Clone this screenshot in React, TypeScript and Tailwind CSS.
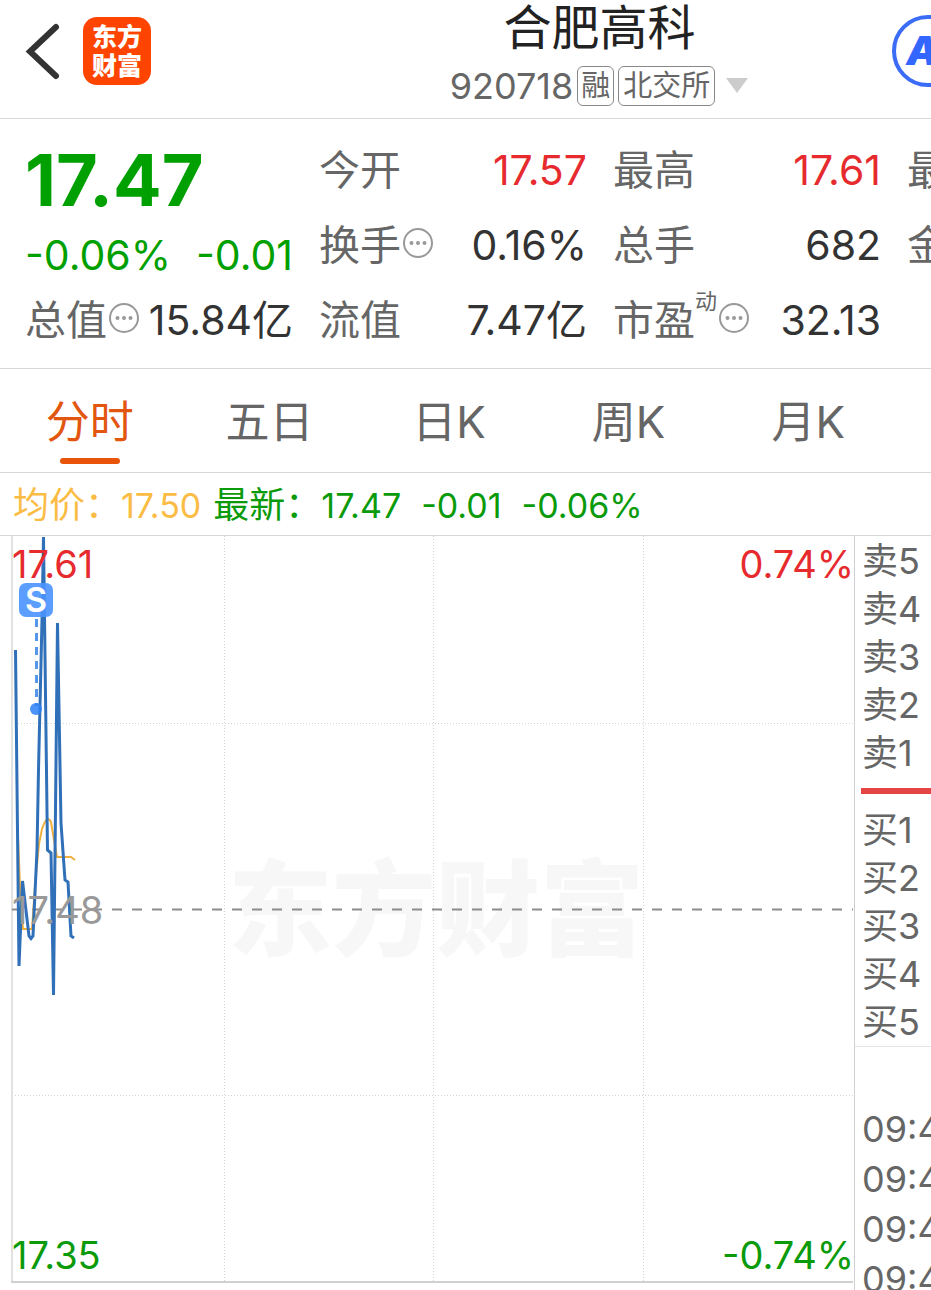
import React, { useState } from "react";

interface Stat {
  label: string;
  value?: string;
  color?: string;
  note?: string;
  info?: boolean;
}

const stats: Stat[] = [
  { label: "今开", value: "17.57", color: "text-[#e62a2e]" },
  { label: "最高", value: "17.61", color: "text-[#e62a2e]" },
  { label: "最低" },
  { label: "换手", value: "0.16%", info: true },
  { label: "总手", value: "682" },
  { label: "金额" },
  { label: "总值", value: "15.84亿", info: true },
  { label: "流值", value: "7.47亿" },
  { label: "市盈", value: "32.13", note: "动", info: true },
];

const tabs = ["分时", "五日", "日K", "周K", "月K"];
const asks = ["卖5", "卖4", "卖3", "卖2", "卖1"];
const bids = ["买1", "买2", "买3", "买4", "买5"];
const ticks = ["09:4", "09:4", "09:4", "09:4"];

const InfoButton: React.FC<{ label: string }> = ({ label }) => (
  <button type="button" aria-label={label} className="mb-1.5 flex-none">
    <svg width="34" height="34" viewBox="0 0 34 34" className="block">
      <circle cx="17" cy="17" r="14" fill="none" stroke="#999" strokeWidth="2" />
      <circle cx="10.500" cy="17" r="2" fill="#999" />
      <circle cx="17" cy="17" r="2" fill="#999" />
      <circle cx="23.500" cy="17" r="2" fill="#999" />
    </svg>
  </button>
);

const StatCell: React.FC<{ stat: Stat }> = ({ stat }) => (
  <div className="flex h-[75px] min-w-0 items-center whitespace-nowrap text-[41px] leading-[75px]">
    <dt className="flex flex-none items-center text-[#666]">
      {stat.label}
      {stat.note && (
        <span className="self-start text-[22px] leading-9">{stat.note}</span>
      )}
      {stat.info && <InfoButton label={`${stat.label}说明`} />}
    </dt>
    {stat.value && (
      <dd className={`ml-auto ${stat.color ?? "text-[#333]"}`}>{stat.value}</dd>
    )}
  </div>
);

const Header: React.FC = () => (
  <header className="flex h-[119px] flex-none items-start border-b border-[#d8d8d8]">
    <button type="button" aria-label="返回" className="ml-6 mt-5 flex-none">
      <svg width="40" height="62" viewBox="0 0 40 62" className="block">
        <path
          d="M32 7 6 31.5 32 56"
          fill="none"
          stroke="#333"
          strokeWidth="6"
          strokeLinecap="round"
        />
      </svg>
    </button>
    <a
      href="#"
      className="ml-[19px] mt-[17px] flex h-[68px] w-[68px] flex-none flex-col items-center justify-center rounded-[14px] bg-[#ff4400] pt-0.5 text-[25px] font-black leading-[29px] text-white"
    >
      <span>东方</span>
      <span>财富</span>
    </a>
    <div className="flex flex-1 flex-col items-center pl-[156px]">
      <h1 className="text-[48px] leading-[56px] text-[#222]">合肥高科</h1>
      <div className="mt-2.5 flex items-center gap-1 text-[#666]">
        <span className="text-[36px] leading-10">920718</span>
        <span className="flex h-10 items-center rounded-md border border-[#888] px-[3px] text-[29px] leading-9">
          融
        </span>
        <span className="flex h-10 items-center rounded-md border border-[#888] px-1 text-[29px] leading-9">
          北交所
        </span>
        <svg width="24" height="16" viewBox="0 0 24 16" className="ml-1.5">
          <path d="M1 0h22L12 15z" fill="#ccc" />
        </svg>
      </div>
    </div>
    <button
      type="button"
      className="-mr-[33px] mt-[15px] flex h-[72px] w-[72px] flex-none items-center justify-center rounded-full border-4 border-[#3b6cf6] text-[40px] font-black italic text-[#3366ff]"
    >
      AI
    </button>
  </header>
);

const Quote: React.FC = () => (
  <dl className="grid flex-none grid-cols-[268fr_268fr_268fr_24fr] gap-x-[26px] border-b border-[#d8d8d8] pb-2.5 pl-[25px] pt-3.5">
    <div className="row-span-2 flex min-w-0 flex-col whitespace-nowrap text-[#00a000]">
      <dt className="text-[72px] font-bold leading-[94px]">17.47</dt>
      <dd className="flex justify-between text-[41px] leading-[56px]">
        <span>-0.06%</span>
        <span>-0.01</span>
      </dd>
    </div>
    {stats.map((stat) => (
      <StatCell key={stat.label} stat={stat} />
    ))}
  </dl>
);

const Chart: React.FC = () => (
  <div className="relative min-w-0 flex-1 pl-[11px]">
    <svg viewBox="0 0 843 747" className="block w-full">
      <text
        x="425"
        y="412"
        textAnchor="middle"
        fontSize="104"
        fontWeight="900"
        fill="#f7f7f7"
      >
        东方财富
      </text>
      <g stroke="#d4d4d4" strokeDasharray="1 2">
        <path d="M213.5 0V745M422.5 0V745M632.5 0V745" />
        <path d="M1 187.5H842M1 559.5H842" />
      </g>
      <path d="M1 0V746" stroke="#e2e2e2" strokeWidth="2" />
      <path d="M0 746H842" stroke="#d0d0d0" strokeWidth="2" />
      <path d="M1 373.5H842" stroke="#8c8c8c" strokeWidth="2" strokeDasharray="10 10" />
      <path
        d="M7 300 9 350 12 393H21L24 350 28 308 31 293Q36 278 40 286L43 304 46 321H60L64 324"
        fill="none"
        stroke="#f0b040"
        strokeWidth="2"
      />
      <path
        d="M4.500 114 8 430 11.500 345 18 400 20 402.500 22 400 26 314 27.500 234 31 84 32.500 1 36.500 314 40 317 42.500 459 46.500 87 50 287 54 344 57 346 60 400 63 402"
        fill="none"
        stroke="#3070b8"
        strokeWidth="3"
      />
      <path d="M25.500 83V170" stroke="#2b7de9" strokeOpacity=".8" strokeWidth="3" strokeDasharray="8 6" />
      <circle cx="25" cy="173" r="6" fill="#2b80f5" fillOpacity=".85" />
      <rect x="8" y="47" width="34" height="34" rx="7" fill="#4a94ff" fillOpacity=".9" />
      <text x="25" y="76" textAnchor="middle" fontSize="34" fontWeight="600" fill="#fff">
        S
      </text>
    </svg>
    <div className="pointer-events-none absolute inset-0 pl-3 text-[38px] leading-[56px]">
      <div className="flex h-full flex-col justify-between">
        <div className="flex justify-between text-[#e62a2e]">
          <span>17.61</span>
          <span>0.74%</span>
        </div>
        <span className="text-[#999]">17.48</span>
        <div className="flex justify-between text-[#0a9a0a]">
          <span>17.35</span>
          <span>-0.74%</span>
        </div>
      </div>
    </div>
  </div>
);

const OrderBook: React.FC = () => (
  <aside className="w-[77px] flex-none overflow-hidden whitespace-nowrap border-l border-[#d0d0d4] pt-px text-[36px] text-[#666]">
    <ul className="pl-[7px] leading-[48px]">
      {asks.map((level) => (
        <li key={level}>{level}</li>
      ))}
    </ul>
    <div className="mb-3 ml-1.5 mt-[11px] h-1.5 bg-[#e64545]" />
    <ul className="border-b border-[#e2e4ea] pl-[7px] leading-[48px]">
      {bids.map((level) => (
        <li key={level}>{level}</li>
      ))}
    </ul>
    <ul className="mt-[57px] pl-[7px] leading-[50px]">
      {ticks.map((time, index) => (
        <li key={index}>{time}</li>
      ))}
    </ul>
  </aside>
);

const App: React.FC = () => {
  const [activeTab, setActiveTab] = useState("分时");

  return (
    <div className="flex h-screen flex-col overflow-hidden bg-white font-[Inter,'Noto_Sans_CJK_SC',sans-serif]">
      <Header />
      <Quote />

      {/* Period tabs */}
      <nav className="flex h-[104px] flex-none border-b border-[#d8d8d8] pr-[33px]">
        {tabs.map((tab) => (
          <button
            key={tab}
            type="button"
            onClick={() => setActiveTab(tab)}
            className={`flex flex-1 flex-col items-center pt-[21px] text-[44px] leading-[64px] ${
              tab === activeTab ? "text-[#e2560f]" : "text-[#666]"
            }`}
          >
            {tab}
            {tab === activeTab && (
              <span className="mt-1 h-1.5 w-[60px] rounded-full bg-[#e8540a]" />
            )}
          </button>
        ))}
      </nav>

      {/* Average and latest price */}
      <div className="flex h-[63px] flex-none items-center whitespace-nowrap border-b border-[#d8d8d8] pl-[13px] pt-0.5 text-[34px] text-[#0a9a0a]">
        <span className="text-[36px] text-[#fbbc45]">均价：</span>
        <span className="text-[#fbbc45]">17.50</span>
        <span className="ml-3 text-[36px]">最新：</span>
        <span>17.47</span>
        <span className="ml-5">-0.01</span>
        <span className="ml-5">-0.06%</span>
      </div>

      <main className="flex flex-1 items-start">
        <Chart />
        <OrderBook />
      </main>
    </div>
  );
};

export default App;
